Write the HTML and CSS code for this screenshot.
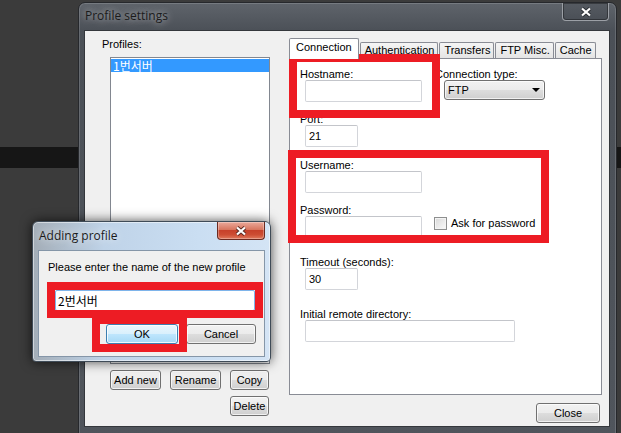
FILE: index.html
```html
<!DOCTYPE html>
<html lang="en">
<head>
    <meta charset="UTF-8">
    <meta name="viewport" content="width=device-width, initial-scale=1.0">
    <title>Profile settings</title>
    <link rel="stylesheet" href="styles.css">
</head>
<body>
    <div class="desktop">
        <div class="band"></div>

        <!-- main window -->
        <div class="window main-window">
            <div class="titlebar">
                <div class="title">Profile settings</div>
                <div class="close-btn close-dark">
                    <svg width="12" height="10" viewBox="0 0 12 10"><path d="M2 1.5 L10 8.5 M10 1.5 L2 8.5" stroke="#2b2f34" stroke-width="4"/><path d="M2 1.5 L10 8.5 M10 1.5 L2 8.5" stroke="#fff" stroke-width="2.2"/></svg>
                </div>
            </div>
            <div class="client">
                <div class="profiles">
                    <label class="caption">Profiles:</label>
                    <div class="listbox">
                        <div class="list-item selected">1번서버</div>
                    </div>
                    <div class="profile-buttons">
                        <button class="btn">Add new</button>
                        <button class="btn">Rename</button>
                        <button class="btn">Copy</button>
                        <button class="btn btn-delete">Delete</button>
                    </div>
                </div>

                <div class="settings">
                    <div class="tabs">
                        <div class="tab active">Connection</div>
                        <div class="tab">Authentication</div>
                        <div class="tab">Transfers</div>
                        <div class="tab">FTP Misc.</div>
                        <div class="tab">Cache</div>
                    </div>
                    <div class="tab-panel">
                        <div class="row">
                            <div class="field field-host">
                                <label class="caption">Hostname:</label>
                                <input class="text text-medium" type="text" value="">
                            </div>
                            <div class="field">
                                <label class="caption">Connection type:</label>
                                <div class="select">FTP<span class="arrow"></span></div>
                            </div>
                        </div>
                        <div class="field gap-11">
                            <label class="caption">Port:</label>
                            <input class="text text-short" type="text" value="21">
                        </div>
                        <div class="field gap-12">
                            <label class="caption">Username:</label>
                            <input class="text text-medium" type="text" value="">
                        </div>
                        <div class="field gap-11">
                            <label class="caption">Password:</label>
                            <div class="row">
                                <input class="text text-medium" type="password" value="">
                                <div class="check"><span class="check-box"></span>Ask for password</div>
                            </div>
                        </div>
                        <div class="field gap-18">
                            <label class="caption">Timeout (seconds):</label>
                            <input class="text text-short" type="text" value="30">
                        </div>
                        <div class="field gap-18">
                            <label class="caption">Initial remote directory:</label>
                            <input class="text text-long" type="text" value="">
                        </div>
                    </div>
                    <div class="footer">
                        <button class="btn btn-close">Close</button>
                    </div>
                </div>
            </div>
        </div>

        <!-- adding profile dialog -->
        <div class="window dialog">
            <div class="titlebar">
                <div class="title">Adding profile</div>
                <div class="close-btn close-red">
                    <svg width="12" height="10" viewBox="0 0 12 10"><path d="M2 1.5 L10 8.5 M10 1.5 L2 8.5" stroke="#5a2a22" stroke-width="4"/><path d="M2 1.5 L10 8.5 M10 1.5 L2 8.5" stroke="#fff" stroke-width="2.2"/></svg>
                </div>
            </div>
            <div class="dialog-body">
                <label class="caption">Please enter the name of the new profile</label>
                <input class="text text-name" type="text" value="2번서버">
                <div class="dialog-buttons">
                    <button class="btn btn-default">OK</button>
                    <button class="btn btn-cancel">Cancel</button>
                </div>
            </div>
        </div>

        <!-- red highlight boxes -->
        <div class="mark mark-host"></div>
        <div class="mark mark-login"></div>
        <div class="mark mark-name"></div>
        <div class="mark mark-ok"></div>
    </div>
</body>
</html>
```

FILE: styles.css
```css
* {
    box-sizing: border-box;
}
body {
    margin: 0;
    font-family: "Liberation Sans", Arial, "Noto Sans CJK KR", sans-serif;
    font-size: 11px;
    color: #000;
    background-color: #3b3b3b;
}
.desktop {
    position: relative;
    width: 621px;
    height: 433px;
    overflow: hidden;
    background-color: #3b3b3b;
}
.band {
    margin-top: 147px;
    height: 21px;
    background-color: #161616;
}

/* windows */
.window {
    position: absolute;
    display: flex;
    flex-direction: column;
}
.titlebar {
    display: flex;
    justify-content: space-between;
    align-items: flex-start;
    flex: none;
}
.title {
    margin: 4px 0 0 1px;
    font-family: "Open Sans", "Liberation Sans", sans-serif;
    font-size: 12px;
    line-height: 16px;
    color: #1b1b1b;
}
.close-btn {
    display: flex;
    align-items: center;
    justify-content: center;
    width: 48px;
    height: 18px;
    border-radius: 0 0 4px 4px;
}
.main-window {
    left: 78px;
    top: 2px;
    width: 539px;
    height: 445px;
    padding: 0 6px 0 5px;
    border: 1px solid #26282c;
    border-radius: 7px 7px 0 0;
    background: linear-gradient(to bottom, #5f646b, #4b5057 28px, #50555c);
    box-shadow: inset 0 0 0 1px rgba(255, 255, 255, 0.15);
}
.main-window .titlebar {
    height: 27px;
}
.main-window .title {
    margin-top: 5px;
    text-shadow: 0 0 6px rgba(255, 255, 255, 0.55), 0 0 12px rgba(255, 255, 255, 0.35);
}
.close-dark {
    width: 47px;
    margin-right: 1px;
    border: 1px solid #9ca0a6;
    border-top: none;
    background: linear-gradient(#565b62, #4a4f56);
    box-shadow: inset 0 0 0 1px rgba(0, 0, 0, 0.35);
}
.client {
    display: flex;
    height: 397px;
    padding-top: 7px;
    border: 1px solid #34373c;
    background-color: #f0f0f0;
}

/* profile list */
.caption {
    display: block;
    line-height: 12px;
    white-space: nowrap;
}
.profiles {
    width: 168px;
    margin-left: 17px;
}
.listbox {
    width: 160px;
    height: 307px;
    margin: 7px 0 0 8px;
    padding: 1px 0;
    border: 1px solid #828790;
    background-color: #fff;
}
.list-item {
    height: 13px;
    padding-left: 2px;
    font-family: "Noto Sans CJK KR", sans-serif;
    font-size: 12px;
    line-height: 13px;
}
.list-item.selected {
    background-color: #3399ff;
    color: #fff;
}
.profile-buttons {
    display: grid;
    grid-template-columns: 51px 51px 39px;
    column-gap: 9px;
    row-gap: 6px;
    margin: 6px 0 0 8px;
}
.btn-delete {
    grid-column: 3;
}

/* buttons */
.btn {
    height: 20px;
    padding: 0;
    font: inherit;
    color: #000;
    border: 1px solid #707070;
    border-radius: 3px;
    background: linear-gradient(#f2f2f2 0%, #ebebeb 50%, #dddddd 51%, #cfcfcf 100%);
    box-shadow: inset 0 0 0 1px rgba(255, 255, 255, 0.7);
}
.btn-default {
    width: 72px;
    border-color: #3c7fb1;
    background: linear-gradient(#eaf6fd 0%, #d9f0fc 50%, #bee6fd 51%, #a7d9f5 100%);
    box-shadow: inset 0 0 0 1px rgba(255, 255, 255, 0.8);
}
.btn-cancel {
    width: 70px;
}
.btn-close {
    width: 64px;
}

/* tabs */
.settings {
    width: 313px;
    margin-left: 19px;
}
.tabs {
    display: flex;
    align-items: flex-end;
    height: 20px;
}
.tab {
    height: 16px;
    margin-right: 1px;
    padding: 1px 3px 0 4px;
    line-height: 12px;
    white-space: nowrap;
    border: 1px solid #898c95;
    border-bottom: none;
    border-radius: 2px 2px 0 0;
    background: linear-gradient(#f5f5f5, #e4e4e4);
}
.tab.active {
    position: relative;
    z-index: 1;
    height: 21px;
    margin-bottom: -1px;
    padding: 2px 6px 0;
    background: #fff;
}
.tab-panel {
    height: 337px;
    padding: 9px 0 0 10px;
    border: 1px solid #898c95;
    background-color: #fff;
}
.row {
    display: flex;
    align-items: flex-start;
}
.field-host {
    width: 135px;
}
.gap-11 {
    margin-top: 11px;
}
.gap-12 {
    margin-top: 12px;
}
.gap-18 {
    margin-top: 18px;
}
.text {
    display: block;
    height: 22px;
    margin: 0 0 0 5px;
    padding: 0 3px;
    font: inherit;
    color: #000;
    border: 1px solid #d3d5da;
    border-top-color: #c3c5ca;
    border-radius: 2px;
    background-color: #fff;
    outline: none;
}
.text-medium {
    width: 117px;
}
.text-short {
    width: 53px;
}
.text-long {
    width: 210px;
}
.select {
    display: flex;
    align-items: center;
    justify-content: space-between;
    width: 101px;
    height: 20px;
    margin-left: 9px;
    padding: 0 4px 0 3px;
    border: 1px solid #707070;
    border-radius: 3px;
    background: linear-gradient(#f2f2f2 0%, #ebebeb 50%, #dddddd 51%, #cfcfcf 100%);
    box-shadow: inset 0 0 0 1px rgba(255, 255, 255, 0.7);
}
.arrow {
    border-top: 4px solid #000;
    border-left: 4px solid transparent;
    border-right: 4px solid transparent;
}
.check {
    display: flex;
    align-items: center;
    gap: 4px;
    margin: 1px 0 0 12px;
    line-height: 13px;
    white-space: nowrap;
}
.check-box {
    width: 13px;
    height: 13px;
    border: 1px solid #8e8f8f;
    background: linear-gradient(135deg, #d8d8d8, #fbfbfb);
    box-shadow: inset 0 0 0 1px #f4f4f4;
}
.footer {
    display: flex;
    justify-content: flex-end;
    margin-top: 8px;
    padding-right: 2px;
}

/* dialog */
.dialog {
    left: 32px;
    top: 221px;
    width: 239px;
    height: 141px;
    padding: 0 5px 4px;
    border: 1px solid #3f4b57;
    border-radius: 6px 6px 4px 4px;
    background: linear-gradient(to right, #a3adb7, #bfd3e8 30%, #cadef2 70%, #d4e4f5);
    box-shadow: 0 0 12px rgba(0, 0, 0, 0.7), inset 0 0 0 1px rgba(255, 255, 255, 0.5);
}
.dialog .titlebar {
    height: 28px;
}
.dialog .title {
    margin-top: 6px;
    text-shadow: 0 0 8px rgba(255, 255, 255, 0.9);
}
.close-red {
    border: 1px solid #6b2a20;
    border-top: none;
    background: linear-gradient(#eaa99b 0%, #d8765f 45%, #c7412a 50%, #cd4d33 75%, #e07a5d 100%);
    box-shadow: inset 0 0 0 1px rgba(255, 255, 255, 0.3);
}
.dialog-body {
    height: 107px;
    padding: 10px 8px 0 9px;
    border: 1px solid #8596a8;
    background-color: #f0f0f0;
}
.text-name {
    width: 200px;
    height: 21px;
    margin: 17px 0 0 7px;
    padding: 0 2px;
    font-family: "Noto Sans CJK KR", sans-serif;
    font-size: 12px;
    border-color: #7eb4ea;
}
.dialog-buttons {
    display: flex;
    justify-content: flex-end;
    gap: 8px;
    margin-top: 13px;
}

/* red annotation boxes */
.mark {
    position: absolute;
    border: 8px solid #ed1c24;
}
.mark-host {
    left: 289px;
    top: 54px;
    width: 151px;
    height: 64px;
}
.mark-login {
    left: 288px;
    top: 150px;
    width: 261px;
    height: 93px;
}
.mark-name {
    left: 47px;
    top: 282px;
    width: 216px;
    height: 36px;
}
.mark-ok {
    left: 92px;
    top: 316px;
    width: 95px;
    height: 36px;
}
```
